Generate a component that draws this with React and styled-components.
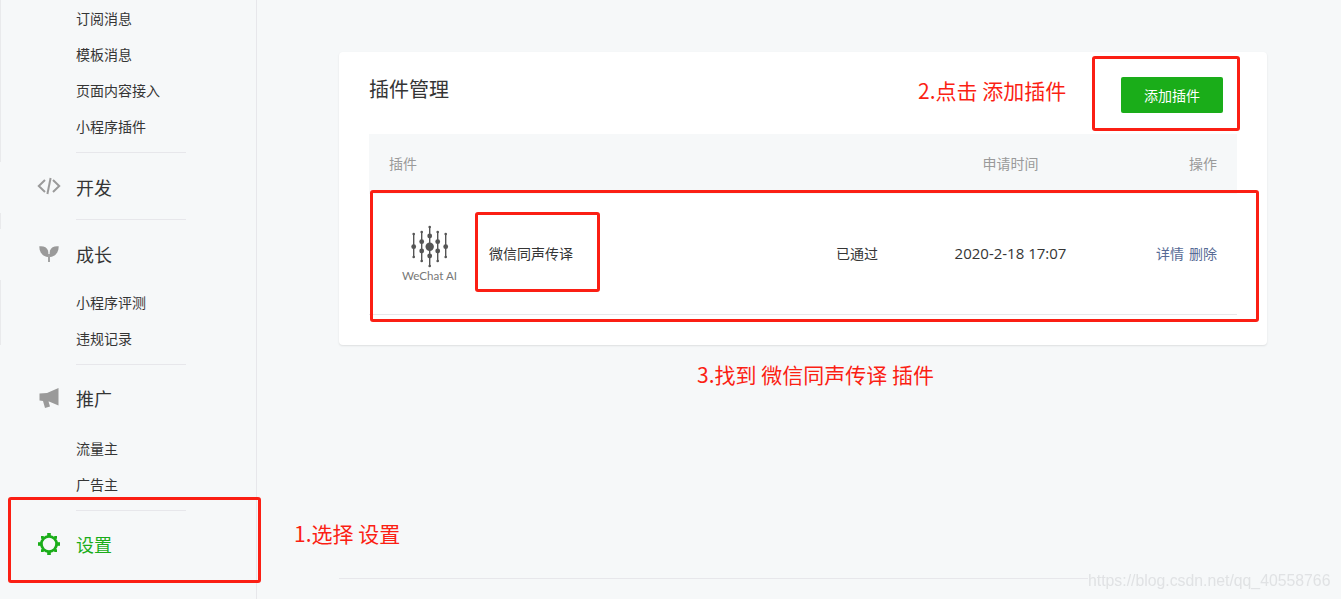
import React from "react";
import styled, { createGlobalStyle } from "styled-components";

const RED = "#fb1f14";
const GREEN = "#1aad19";
const PAGE_BG = "#f6f8f9";

const GlobalStyle = createGlobalStyle`
  html, body {
    margin: 0;
    height: 100%;
    overflow: hidden;
    background: ${PAGE_BG};
    font-family: "Noto Sans CJK SC", sans-serif;
    color: #353535;
  }
`;

const Page = styled.div`
  position: relative;
  display: flex;
  height: 599px;
  width: 1341px;
  overflow: hidden;
`;

const Sidebar = styled.nav`
  flex: none;
  width: 256px;
  padding-top: 1px;
  box-sizing: content-box;
  border-right: 1px solid #e7e7eb;
  background-image: linear-gradient(#e9eaec, #e9eaec);
  background-size: 1px 345px;
  background-repeat: no-repeat;
`;

const SubList = styled.ul`
  list-style: none;
  margin: ${(p) => p.$top || 0}px 0 0;
  padding: 0;
`;

const SubItem = styled.li`
  height: 36px;
  line-height: 34px;
  padding-left: 76px;
  font-size: 14px;
`;

const Divider = styled.div`
  width: 110px;
  height: 1px;
  margin: ${(p) => p.$top}px 0 0 76px;
  background: #e7e7eb;
`;

const Heading = styled.div`
  position: relative;
  display: flex;
  align-items: center;
  height: 60px;
  box-sizing: border-box;
  padding-bottom: 2px;
  margin-top: ${(p) => p.$top}px;
  font-size: 18px;
  color: ${(p) => (p.$active ? GREEN : "#353535")};

  &::before {
    content: "";
    position: absolute;
    left: 0;
    top: 4px;
    width: 1px;
    height: 51px;
    background: ${PAGE_BG};
  }
`;

const IconSlot = styled.span`
  display: flex;
  justify-content: center;
  width: 26px;
  margin: 0 14px 0 36px;
`;

const Main = styled.main`
  flex: 1;
  padding: 52px 74px 0 82px;
`;

const Card = styled.section`
  width: 928px;
  height: 293px;
  box-sizing: border-box;
  padding: 0 30px;
  background: #fff;
  border-radius: 4px;
  box-shadow: 0 1px 2px rgba(0, 0, 0, 0.1);
`;

const CardHead = styled.header`
  display: flex;
  justify-content: space-between;
  align-items: flex-start;
  height: 82px;
  padding: 25px 14px 0 0;
  box-sizing: border-box;
`;

const Title = styled.h2`
  margin: 0;
  font-size: 20px;
  font-weight: 400;
  line-height: 24px;
`;

const AddButton = styled.button`
  width: 102px;
  height: 36px;
  padding: 0 0 1px;
  border: 0;
  border-radius: 2px;
  background: ${GREEN};
  color: #fff;
  font: inherit;
  font-size: 14px;
`;

const Row = styled.div`
  display: grid;
  grid-template-columns: 391px 154px 153px 130px;
  align-items: center;
  padding: 0 20px;
  font-size: 14px;
`;

const HeadRow = styled(Row)`
  height: 60px;
  box-sizing: border-box;
  padding-bottom: 2px;
  background: ${PAGE_BG};
  color: #9a9a9a;
`;

const BodyRow = styled(Row)`
  height: 121px;
  box-sizing: border-box;
  padding-bottom: 3px;
  border-bottom: 1px solid #e7e7eb;
`;

const Centered = styled.div`
  text-align: center;
`;

const DateText = styled(Centered)`
  font-family: "Open Sans", sans-serif;
  font-size: 15px;
`;

const Actions = styled.div`
  display: flex;
  justify-content: flex-end;
  gap: 5px;
`;

const ActionLink = styled.a`
  color: #576b95;
`;

const HeadRight = styled.div`
  text-align: right;
`;

const PluginCell = styled.div`
  display: flex;
  align-items: center;
`;

const Logo = styled.div`
  display: flex;
  flex-direction: column;
  align-items: center;
  width: 55px;
  margin: 2px 32px 0 13px;
`;

const LogoText = styled.span`
  font-family: "Lato", sans-serif;
  font-size: 11.6px;
  line-height: 14px;
  color: #777;
  white-space: nowrap;
`;

const Rule = styled.div`
  width: 749px;
  height: 1px;
  margin-top: 233px;
  background: #e7e7eb;
`;

const Watermark = styled.span`
  position: absolute;
  left: 1088px;
  top: 571px;
  font-family: "Liberation Sans", sans-serif;
  font-size: 15.8px;
  line-height: 20px;
  white-space: nowrap;
  color: #e0e2e4;
  filter: blur(0.4px);
`;

const Outline = styled.div`
  position: absolute;
  left: ${(p) => p.$x}px;
  top: ${(p) => p.$y}px;
  width: ${(p) => p.$w}px;
  height: ${(p) => p.$h}px;
  box-sizing: border-box;
  border: 3px solid ${RED};
  border-radius: 3px;
`;

const Note = styled.span`
  position: absolute;
  left: ${(p) => p.$x}px;
  top: ${(p) => p.$y}px;
  font-size: 21px;
  line-height: 28px;
  color: ${RED};
  white-space: nowrap;
`;

const CodeIcon = () => (
  <svg width="24" height="20" viewBox="0 0 24 20" fill="none" stroke="#9a9a9a" strokeWidth="2">
    <path d="M8 3 1.8 9 8 15" />
    <path d="M16 3 22.2 9 16 15" />
    <path d="M13.6 1 10.4 17" />
  </svg>
);

const SproutIcon = () => (
  <svg width="20" height="16" viewBox="0 0 20 16" fill="#9a9a9a">
    <path d="M0.3 0.3C4.5 -0.2 8 1.2 9 4.6 9.5 6.5 9.4 9 9 11 3.8 10.6 0.2 6.5 0.3 0.3Z" />
    <path d="M19.7 0.3C15.5 -0.2 12 1.2 11 4.6 10.5 6.5 10.6 9 11 11 16.2 10.6 19.8 6.5 19.7 0.3Z" />
    <rect x="9.1" y="8" width="1.8" height="8" />
  </svg>
);

const MegaphoneIcon = () => (
  <svg width="20" height="20" viewBox="0 0 20 20" fill="#9a9a9a">
    <path d="M19.5 0V17.5L10 13.5H9.5L11 18.5 6 20 4 13 0.5 12.5V5.5L8 5Z" />
  </svg>
);

const GearIcon = () => (
  <svg width="22" height="22" viewBox="0 0 22 22" fill={GREEN}>
    <circle cx="11" cy="11" r="7.6" fill="none" stroke={GREEN} strokeWidth="2.8" />
    <rect x="9.2" y="0" width="3.6" height="3.4" />
    <rect x="9.2" y="18.6" width="3.6" height="3.4" />
    <rect x="0" y="9.2" width="3.4" height="3.6" />
    <rect x="18.6" y="9.2" width="3.4" height="3.6" />
    <rect x="3" y="3" width="2.8" height="2.8" />
    <rect x="16.2" y="3" width="2.8" height="2.8" />
    <rect x="3" y="16.2" width="2.8" height="2.8" />
    <rect x="16.2" y="16.2" width="2.8" height="2.8" />
  </svg>
);

// five bars of the WeChat AI mark: x, top, bottom, and the dots on each bar
const logoBars = [
  { x: 4.7, top: 9, bottom: 32, dots: [[21.7, 2.4]] },
  { x: 12.7, top: 7, bottom: 36, dots: [[16.7, 2.4], [26, 2.4]] },
  { x: 20.7, top: 2, bottom: 41, dots: [[11, 2.4], [21.7, 4.2], [31, 2.4]] },
  { x: 28.7, top: 7, bottom: 36, dots: [[16.7, 2.4], [26, 2.4]] },
  { x: 36.7, top: 9, bottom: 32, dots: [[21.7, 2.4]] },
];

const WeChatMark = () => (
  <svg width="42" height="44" viewBox="0 0 42 44" fill="#555" stroke="none">
    {logoBars.map((bar) => (
      <g key={bar.x}>
        <rect x={bar.x - 0.7} y={bar.top} width="1.4" height={bar.bottom - bar.top} />
        <circle cx={bar.x} cy={bar.top} r="1.3" />
        <circle cx={bar.x} cy={bar.bottom} r="1.3" />
        {bar.dots.map(([cy, r]) => (
          <circle key={cy} cx={bar.x} cy={cy} r={r} />
        ))}
      </g>
    ))}
  </svg>
);

function App() {
  return (
    <Page>
      <GlobalStyle />
      <Sidebar>
        <SubList>
          <SubItem>订阅消息</SubItem>
          <SubItem>模板消息</SubItem>
          <SubItem>页面内容接入</SubItem>
          <SubItem>小程序插件</SubItem>
        </SubList>
        <Divider $top={7} />
        <Heading $top={5}>
          <IconSlot><CodeIcon /></IconSlot>
          开发
        </Heading>
        <Divider $top={1} />
        <Heading $top={5}>
          <IconSlot><SproutIcon /></IconSlot>
          成长
        </Heading>
        <SubList>
          <SubItem>小程序评测</SubItem>
          <SubItem>违规记录</SubItem>
        </SubList>
        <Divider $top={7} />
        <Heading $top={4}>
          <IconSlot><MegaphoneIcon /></IconSlot>
          推广
        </Heading>
        <SubList $top={2}>
          <SubItem>流量主</SubItem>
          <SubItem>广告主</SubItem>
        </SubList>
        <Divider $top={7} />
        <Heading $top={4} $active>
          <IconSlot><GearIcon /></IconSlot>
          设置
        </Heading>
      </Sidebar>

      <Main>
        <Card>
          <CardHead>
            <Title>插件管理</Title>
            <AddButton>添加插件</AddButton>
          </CardHead>
          <HeadRow>
            <div>插件</div>
            <div />
            <Centered>申请时间</Centered>
            <HeadRight>操作</HeadRight>
          </HeadRow>
          <BodyRow>
            <PluginCell>
              <Logo>
                <WeChatMark />
                <LogoText>WeChat AI</LogoText>
              </Logo>
              微信同声传译
            </PluginCell>
            <Centered>已通过</Centered>
            <DateText>2020-2-18 17:07</DateText>
            <Actions>
              <ActionLink>详情</ActionLink>
              <ActionLink>删除</ActionLink>
            </Actions>
          </BodyRow>
        </Card>
        <Rule />
      </Main>

      <Watermark>https://blog.csdn.net/qq_40558766</Watermark>

      <Outline $x={8} $y={497} $w={253} $h={86} />
      <Outline $x={1092} $y={56} $w={148} $h={75} />
      <Outline $x={370} $y={190} $w={889} $h={132} />
      <Outline $x={475} $y={212} $w={125} $h={80} />
      <Note $x={294} $y={519}>1.选择 设置</Note>
      <Note $x={918} $y={76}>2.点击 添加插件</Note>
      <Note $x={697} $y={360}>3.找到 微信同声传译 插件</Note>
    </Page>
  );
}

export default App;
